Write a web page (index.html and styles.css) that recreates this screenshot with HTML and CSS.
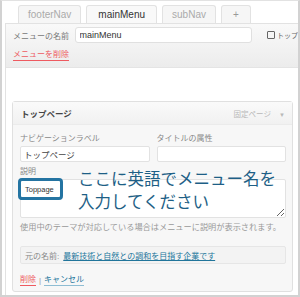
FILE: index.html
```html
<!DOCTYPE html>
<html lang="ja">
<head>
    <meta charset="UTF-8">
    <meta name="viewport" content="width=device-width, initial-scale=1">
    <title>メニュー</title>
    <link rel="stylesheet" href="styles.css">
</head>
<body>

<div class="frame">
    <div class="tabs">
        <span class="tab">footerNav</span>
        <span class="tab active">mainMenu</span>
        <span class="tab">subNav</span>
        <span class="tab plus">+</span>
    </div>

    <div class="panel">
        <div class="panel-head">
            <div class="name-row">
                <label class="name-label" for="menuName">メニューの名前</label>
                <input class="name-input" type="text" id="menuName" value="mainMenu">
                <span class="auto-check"><span class="box"></span>トップ</span>
            </div>
            <a class="delete-menu" href="#">メニューを削除</a>
        </div>

        <div class="panel-body">
            <div class="item">
                <div class="item-head">
                    <span class="item-title">トップページ</span>
                    <span class="item-type">固定ページ <span class="arrow">▼</span></span>
                </div>
                <div class="item-body">
                    <div class="field-row">
                        <div class="field">
                            <label>ナビゲーションラベル</label>
                            <input type="text" value="トップページ">
                        </div>
                        <div class="field">
                            <label>タイトルの属性</label>
                            <input type="text" value="">
                        </div>
                    </div>
                    <div class="field desc">
                        <label>説明</label>
                        <textarea>Toppage</textarea>
                        <span class="mark"></span>
                        <p class="note">ここに英語でメニュー名を<br>入力してください</p>
                    </div>
                    <p class="help">使用中のテーマが対応している場合はメニューに説明が表示されます。</p>
                    <div class="original">元の名前: <a href="#">最新技術と自然との調和を目指す企業です</a></div>
                    <div class="actions">
                        <a class="remove" href="#">削除</a>
                        <span class="sep">|</span>
                        <a class="cancel" href="#">キャンセル</a>
                    </div>
                </div>
            </div>
        </div>
    </div>
</div>

</body>
</html>
```

FILE: styles.css
```css
body {
    margin: 0;
    background-color: #fff;
    font-family: "Liberation Sans", "Noto Sans CJK JP", sans-serif;
    color: #333;
}

.frame {
    width: 300px;
    height: 297px;
    box-sizing: border-box;
    border: 2px solid #d2d2d2;
    border-top: 1px solid #e2e2e2;
    overflow: hidden;
    display: flex;
    flex-direction: column;
}

/* tabs */
.tabs {
    display: flex;
    gap: 5px;
    padding: 4px 0 0 16px;
    height: 18px;
}

.tab {
    display: flex;
    align-items: center;
    padding: 0 9px;
    font-size: 10px;
    color: #aaa;
    background-color: #f6f6f6;
    border: 1px solid #e2e2e2;
    border-bottom: none;
    border-radius: 3px 3px 0 0;
}

.tab.active {
    color: #333;
    background-color: #f9f9f9;
    padding: 0 11px;
}

.tab.plus {
    padding: 0 11px;
    color: #999;
}

/* menu panel */
.panel {
    margin-left: 3px;
    flex: 1;
    display: flex;
    flex-direction: column;
    border-top: 1px solid #e2e2e2;
    border-left: 1px solid #e2e2e2;
}

.panel-head {
    height: 44px;
    box-sizing: border-box;
    padding: 3px 0 0 7px;
    background: linear-gradient(#f9f9f9, #ececec);
    border-bottom: 1px solid #e4e4e4;
}

.name-row {
    display: flex;
    align-items: center;
    height: 16px;
}

.name-label {
    font-size: 8px;
    color: #777;
    width: 64px;
}

.name-input {
    width: 184px;
    height: 16px;
    box-sizing: border-box;
    margin: 0 12px 0 0;
    padding: 0 4px;
    font: 9px "Liberation Sans", sans-serif;
    color: #333;
    border: 1px solid #e0e0e0;
    border-radius: 3px;
    background-color: #fff;
}

.auto-check {
    display: flex;
    align-items: center;
    gap: 2px;
    padding-left: 3px;
    font-size: 7px;
    color: #666;
    white-space: nowrap;
}

.auto-check .box {
    width: 6px;
    height: 6px;
    border: 1px solid #666;
    border-radius: 1px;
}

.delete-menu {
    display: inline-block;
    margin-top: 6px;
    font-size: 8px;
    line-height: 11px;
    color: #ee5a60;
    text-decoration: none;
    border-bottom: 1px solid #ee5a60;
}

.panel-body {
    flex: 1;
    background-color: #fff;
    padding: 33px 5px 2px 6px;
}

/* menu item */
.item {
    height: 191px;
    box-sizing: border-box;
    border: 1px solid #e0e0e0;
    border-radius: 3px;
    background-color: #f7f7f7;
}

.item-head {
    height: 22px;
    display: flex;
    align-items: center;
    justify-content: space-between;
    padding: 0 7px 0 8px;
    background: linear-gradient(#fafafa, #f1f1f1);
    border-bottom: 1px solid #ebebeb;
}

.item-title {
    font-size: 8.5px;
    font-weight: bold;
    color: #444;
}

.item-type {
    font-size: 7.5px;
    color: #b8b8b8;
}

.item-type .arrow {
    font-size: 6px;
    margin-left: 6px;
}

.item-body {
    padding: 8px 6px 0 7px;
}

.field-row {
    display: flex;
    gap: 7px;
}

.field {
    flex: 1;
    display: flex;
    flex-direction: column;
}

.field label {
    font-size: 8px;
    line-height: 11px;
    color: #888;
    margin-bottom: 2px;
}

.field input {
    height: 16px;
    box-sizing: border-box;
    margin: 0;
    padding: 0 3px;
    font: 8.5px "Liberation Sans", "Noto Sans CJK JP", sans-serif;
    color: #444;
    border: 1px solid #e2e2e2;
    border-radius: 2px;
    background-color: #fff;
}

.desc {
    position: relative;
    margin-top: 4px;
}

.desc textarea {
    height: 39px;
    box-sizing: border-box;
    margin: 0;
    padding: 5px 4px;
    font: 7.5px "Liberation Sans", sans-serif;
    color: #333;
    border: 1px solid #e2e2e2;
    border-radius: 2px;
    background-color: #fff;
}

/* annotation drawn over the textarea */
.mark {
    position: absolute;
    left: -2px;
    top: 12px;
    width: 45px;
    height: 22px;
    box-sizing: border-box;
    border: 3px solid #2474a2;
    border-radius: 4px;
}

.note {
    position: absolute;
    left: 58px;
    top: 2px;
    margin: 0;
    font-size: 16.5px;
    line-height: 23px;
    color: #1e5f86;
    white-space: nowrap;
}

.help {
    margin: 4px 0 0;
    font-size: 8.2px;
    line-height: 12px;
    color: #999;
    white-space: nowrap;
}

.original {
    margin-top: 12px;
    height: 18px;
    box-sizing: border-box;
    padding: 0 4px;
    display: flex;
    align-items: center;
    gap: 4px;
    font-size: 8px;
    color: #888;
    border: 1px solid #e6e6e6;
    border-radius: 2px;
    background-color: #f3f3f3;
}

.original a {
    color: #21759b;
}

.actions {
    margin-top: 10px;
    display: flex;
    align-items: center;
    gap: 3px;
    font-size: 8px;
    line-height: 11px;
}

.actions a {
    text-decoration: none;
}

.remove {
    color: #ee5a60;
    border-bottom: 1px solid #ee5a60;
}

.cancel {
    color: #21759b;
    border-bottom: 1px solid #8fbdd3;
}

.sep {
    color: #999;
}
```
